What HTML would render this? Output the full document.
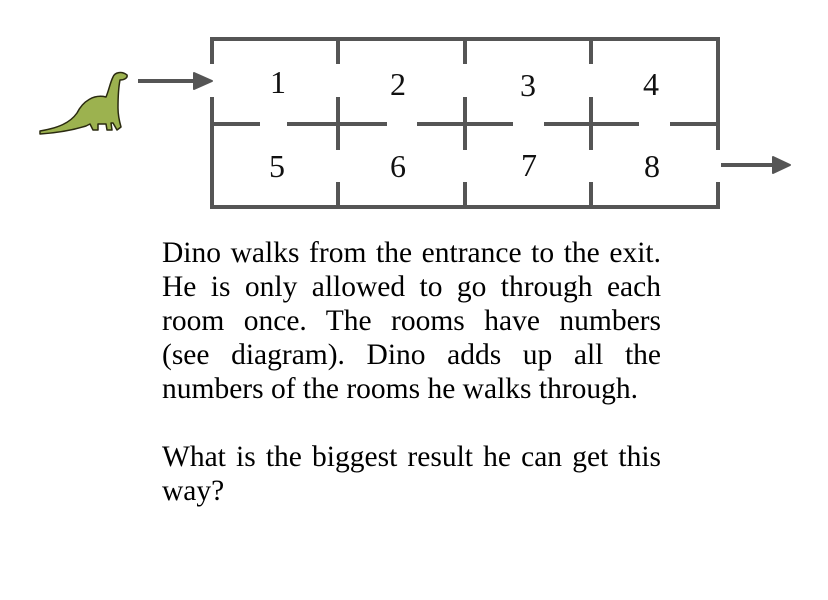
<!DOCTYPE html>
<html><head><meta charset="utf-8"><style>
html,body{margin:0;padding:0;background:#fff;width:828px;height:600px;overflow:hidden}
.t{position:absolute;left:162px;top:236px;width:499px;font-family:"Liberation Serif",serif;font-size:29.5px;line-height:34px;color:#000}
.j{text-align:justify;text-align-last:justify}
.l{text-align:left;white-space:nowrap}
</style></head><body>
<svg width="828" height="230" style="position:absolute;left:0;top:0">
<g stroke="#555" stroke-width="4" fill="none" stroke-linecap="butt">
<path d="M212 64V39H718V150M212 97V207H718V182"/>
<path d="M338 39V64M338 97V150M338 182V207"/>
<path d="M465 39V64M465 97V150M465 182V207"/>
<path d="M591 39V64M591 97V150M591 182V207"/>
<path d="M212 124H260M287 124H387M417 124H513M544 124H639M670 124H718"/>
<path d="M138 81H196M721 165H775"/>
</g>
<path d="M194 73L212 81L194 89Z" fill="#555" stroke="#555" stroke-width="2" stroke-linejoin="round"/>
<path d="M773 157L790 165L773 173Z" fill="#555" stroke="#555" stroke-width="2" stroke-linejoin="round"/>
<g font-family="Liberation Serif,serif" font-size="32" text-anchor="middle" fill="#111">
<text x="278" y="93">1</text><text x="398" y="95">2</text><text x="528" y="96">3</text><text x="651" y="95">4</text>
<text x="277" y="177">5</text><text x="398" y="177">6</text><text x="529" y="176">7</text><text x="652" y="177">8</text>
</g>
<path d="M40 131C58 128 70 123 77 113C83 101 94 94 106 97C109 90 110 83 113 77C115 72 122 71 127 75C128 78 124 80 120 80C118 90 118 100 118 108C118 114 119 120 121 127L117 130L113 123L111 123L112 130L107 130L106 124L98 124L98 130L93 130L90 124L86 126C70 131 55 133 40 134Z" fill="#9cb24f" stroke="#2a2a10" stroke-width="1.5" stroke-linejoin="round"/>
</svg>
<div class="t">
<div class="j">Dino walks from the entrance to the exit.</div>
<div class="j">He is only allowed to go through each</div>
<div class="j">room once. The rooms have numbers</div>
<div class="j">(see diagram). Dino adds up all the</div>
<div class="l">numbers of the rooms he walks through.</div>
<div class="l">&nbsp;</div>
<div class="j">What is the biggest result he can get this</div>
<div class="l">way?</div>
</div>
</body></html>
